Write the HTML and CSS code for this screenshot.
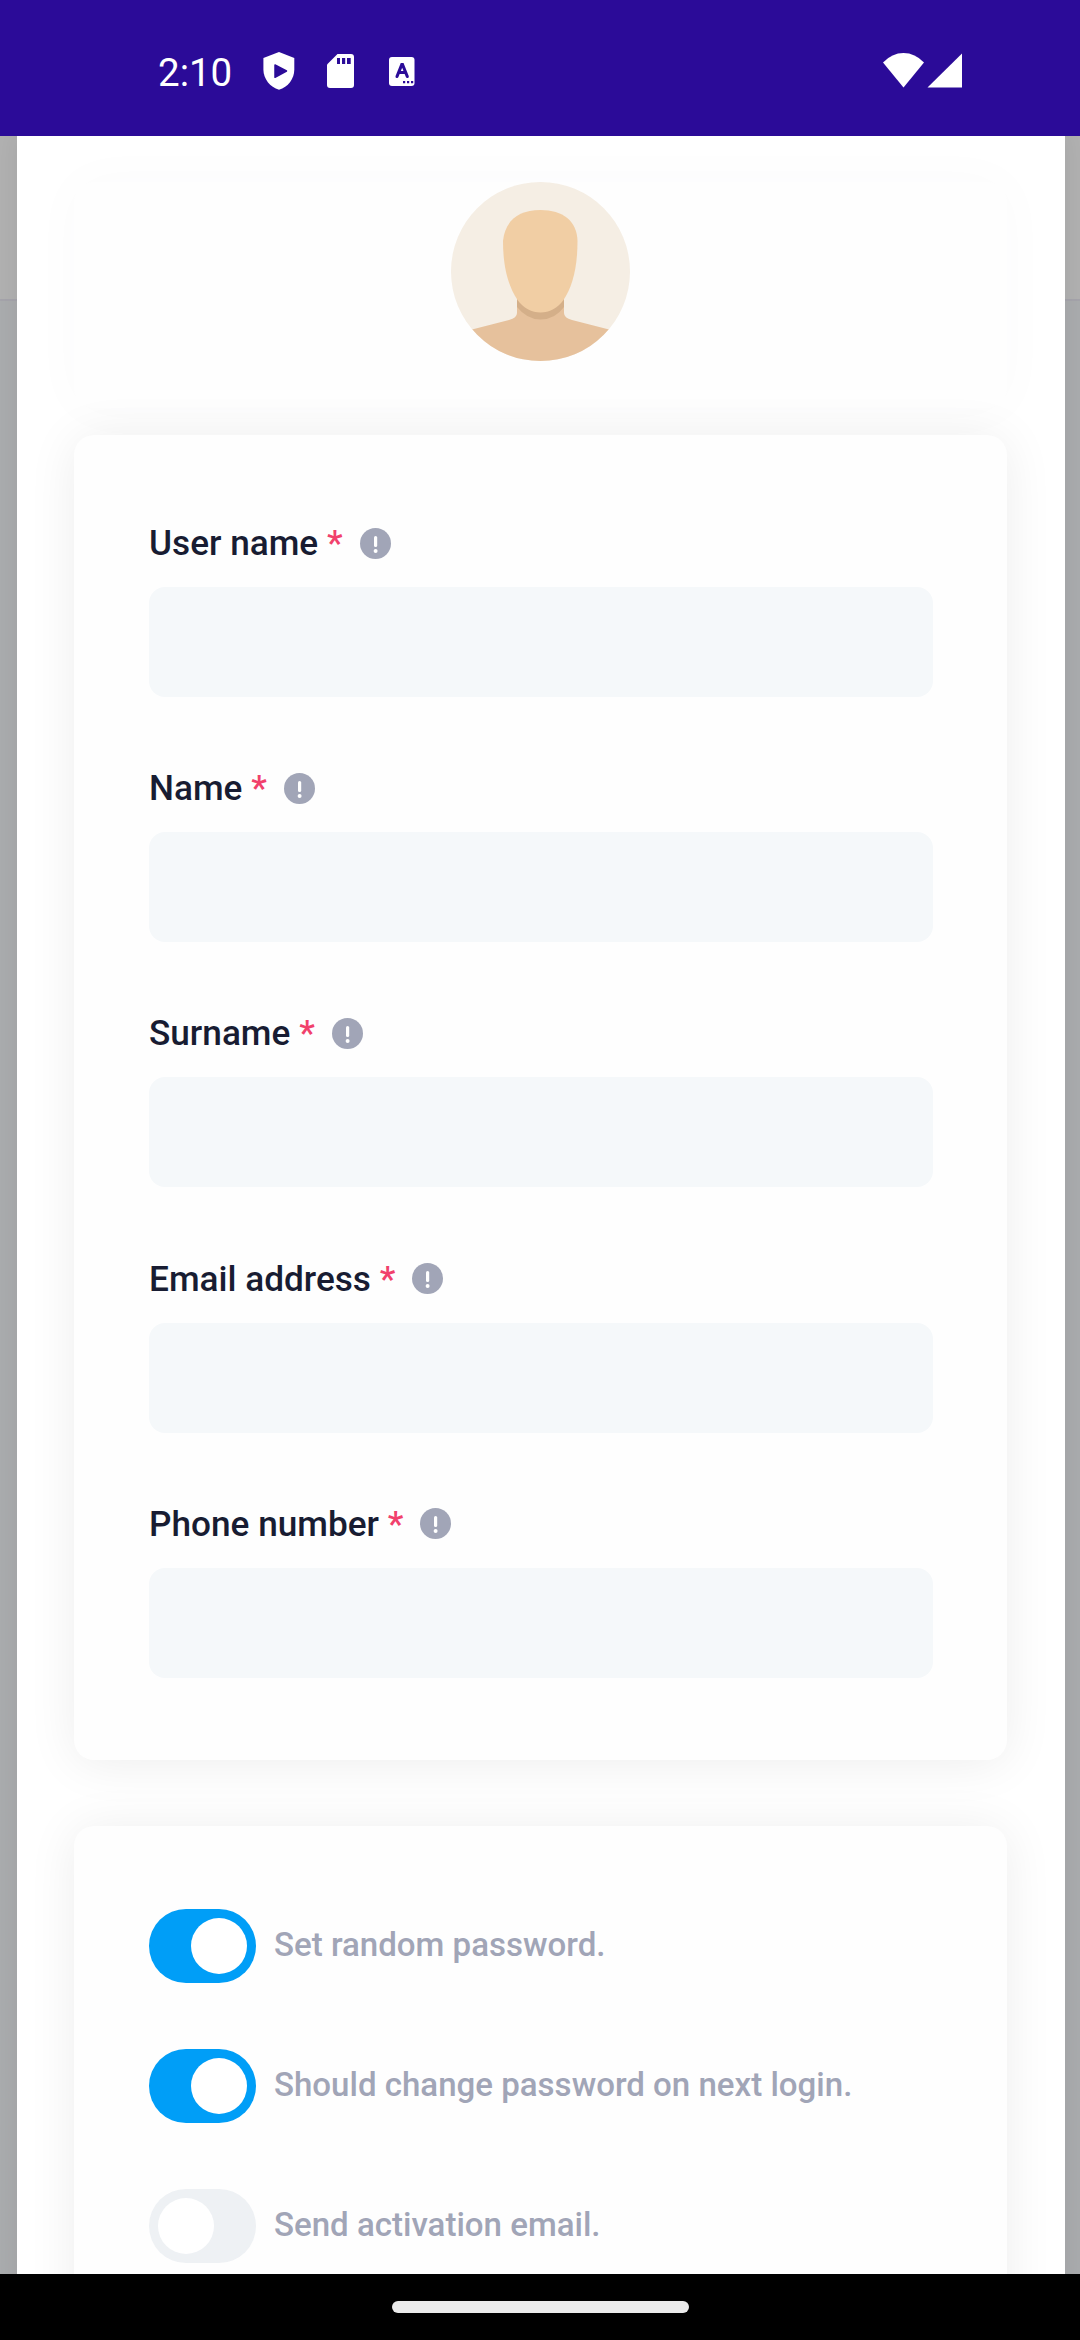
FILE: index.html
```html
<!DOCTYPE html>
<html lang="en">
<head>
<meta charset="utf-8">
<title>Create new user</title>
<link rel="stylesheet" href="styles.css">
</head>
<body>
<svg class="defs" aria-hidden="true">
  <symbol id="info" viewBox="0 0 31 31">
    <circle cx="15.5" cy="15.5" r="15.5" fill="#a1a5b7"/>
    <rect x="14" y="8" width="3.2" height="11" rx="1.6" fill="#fff"/>
    <circle cx="15.6" cy="22.9" r="2" fill="#fff"/>
  </symbol>
</svg>
<div class="screen">
  <header class="status">
    <span class="time">2:10</span>
    <svg class="shield" width="32" height="38" viewBox="0 0 32 38"><path fill="#fff" d="M16 0 L31.3 6 V17.5 C31.3 27 25 35 16 37.8 C7 35 .4 27 .4 17.5 V6Z"/><path d="M12 13 L23.5 19 L12 25.3Z" fill="#2b0b98" stroke="#2b0b98" stroke-width="1.5" stroke-linejoin="round"/></svg>
    <svg class="sd" width="28" height="36" viewBox="0 0 28 36"><path fill="#fff" d="M10.5 1 H24 Q27 1 27 4 V32 Q27 35 24 35 H3 Q0 35 0 32 V11.5Z"/><path fill="#2b0b98" d="M10 5h3v6h-3zM15 5h3.200v6h-3.200zM20 5h3.700v6h-3.700z"/></svg>
    <svg class="lang" width="26" height="29" viewBox="0 0 26 29"><rect width="25.500" height="29" rx="3" fill="#fff"/><path d="M8 19.500 L12.800 7.500 H13.500 L18.300 19.500 M10 15.500 H16.500" fill="none" stroke="#2b0b98" stroke-width="3.100" stroke-linecap="round"/><path fill="#2b0b98" d="M14 24h2.200v2.200h-2.200zM18 24h2.200v2.200h-2.200zM22 24h2.200v2.200h-2.200z"/></svg>
    <svg class="signals" width="80" height="36" viewBox="0 0 80 36"><path fill="#fff" d="M0 9.500 Q9 0 20.500 0 Q32 0 41 9.500 L20.500 34.500Z"/><path fill="#fff" d="M44.500 34.500 L79 .5 V34.500Z"/></svg>
  </header>
  <main class="backdrop">
    <div class="modal">
      <div class="profile">
        <svg class="avatar" viewBox="0 0 179 179">
          <defs><clipPath id="round"><circle cx="89.500" cy="89.500" r="89.500"/></clipPath></defs>
          <g clip-path="url(#round)">
            <path fill="#f5eee4" d="M0 0h179v179H0z"/>
            <path fill="#e6c19c" d="M66 110 V131 Q66 136 58 138 L21 147.500 V179 H158 V147.500 L121 138 Q113 136 113 131 V110Z"/>
            <path fill="#d4af89" d="M66 110 H113 V125 Q104 137.500 89.500 137.500 Q76 137.500 66 125Z"/>
            <path fill="#f1cea4" d="M89.500 28 C112 28 126 39 126.500 59 C126.500 87 121 105 112.500 118 C107 126 98 130.500 89.500 130.500 C81 130.500 72 126 66.500 118 C58 105 52 87 52 59 C54 39 67 28 89.500 28Z"/>
          </g>
        </svg>
      </div>
      <section class="card">
        <div class="field"><label class="label" for="user">User name <span class="star">*</span><svg class="info"><use href="#info"/></svg></label><input class="input" id="user"></div>
        <div class="field"><label class="label" for="name">Name <span class="star">*</span><svg class="info"><use href="#info"/></svg></label><input class="input" id="name"></div>
        <div class="field"><label class="label" for="surname">Surname <span class="star">*</span><svg class="info"><use href="#info"/></svg></label><input class="input" id="surname"></div>
        <div class="field"><label class="label" for="email">Email address <span class="star">*</span><svg class="info"><use href="#info"/></svg></label><input class="input" id="email"></div>
        <div class="field"><label class="label" for="phone">Phone number <span class="star">*</span><svg class="info"><use href="#info"/></svg></label><input class="input" id="phone"></div>
      </section>
      <section class="card options">
        <div class="option"><span class="toggle on"><span class="knob"></span></span><span class="caption">Set random password.</span></div>
        <div class="option"><span class="toggle on"><span class="knob"></span></span><span class="caption">Should change password on next login.</span></div>
        <div class="option"><span class="toggle"><span class="knob"></span></span><span class="caption">Send activation email.</span></div>
      </section>
    </div>
  </main>
  <footer class="nav"><span class="handle"></span></footer>
</div>
</body>
</html>
```
FILE: styles.css
```css
* { box-sizing: border-box; }
body { margin: 0; font-family: Roboto, "Liberation Sans", sans-serif; }
.defs { display: none; }
.screen { width: 1080px; height: 2340px; display: flex; flex-direction: column; overflow: hidden; }

.status { height: 136px; flex: none; background: #2b0b98; display: flex; align-items: flex-start; padding: 52px 117px 0 158px; color: #fff; }
.time { width: 105px; font-size: 38.5px; line-height: 41px; white-space: nowrap; }
.sd { margin: 1px 0 0 32px; }
.lang { margin: 5px 0 0 34px; }
.signals { margin: 1px 0 0 auto; }

.backdrop { flex: 1; min-height: 0; overflow: hidden; padding: 0 15px 0 17px; background: linear-gradient(#b0b0b0 163px, #a4a3aa 163px, #a4a3aa 165px, #a9abad 165px); }
.modal { background: #fff; height: 2200px; padding: 46px 58px 0 57px; box-shadow: 0 0 20px rgba(0, 0, 0, .06); }

.profile { height: 226px; margin-bottom: 27px; border-radius: 20px; background: #fefefe; box-shadow: 0 0 53px 4px rgba(60, 70, 90, .02); display: flex; justify-content: center; }
.avatar { width: 179px; height: 179px; }

.card { position: relative; background: #fefefe; border-radius: 20px; padding: 88px 74px 82px 75px; box-shadow: 0 3px 50px rgba(0, 0, 0, .075); display: flex; flex-direction: column; gap: 71.2px; margin-bottom: 66px; }
.field { display: flex; flex-direction: column; gap: 24px; }
.label { height: 40px; display: flex; align-items: center; white-space: pre; font-size: 35.2px; font-weight: 500; color: #181c32; }
.star { color: #f1416c; }
.info { width: 31px; height: 31px; margin-left: 17px; }
.input { display: block; width: 100%; height: 110px; border: 0; border-radius: 16px; background: #f5f8fa; outline: 0; }

.options { padding-top: 83px; gap: 66px; }
.option { display: flex; align-items: center; gap: 18px; height: 74px; }
.toggle { width: 107px; height: 74px; border-radius: 37px; background: #eef1f4; display: flex; align-items: center; padding: 0 9px; }
.toggle.on { background: #009ef7; justify-content: flex-end; }
.knob { width: 56px; height: 56px; border-radius: 50%; background: #fff; }
.caption { font-size: 33.05px; line-height: 40px; padding-bottom: 2px; font-weight: 500; color: #a1a5b7; white-space: nowrap; }

.nav { height: 66px; flex: none; background: #000; display: flex; justify-content: center; padding-top: 27px; }
.handle { width: 297px; height: 12px; border-radius: 6px; background: #ebebeb; }
```
